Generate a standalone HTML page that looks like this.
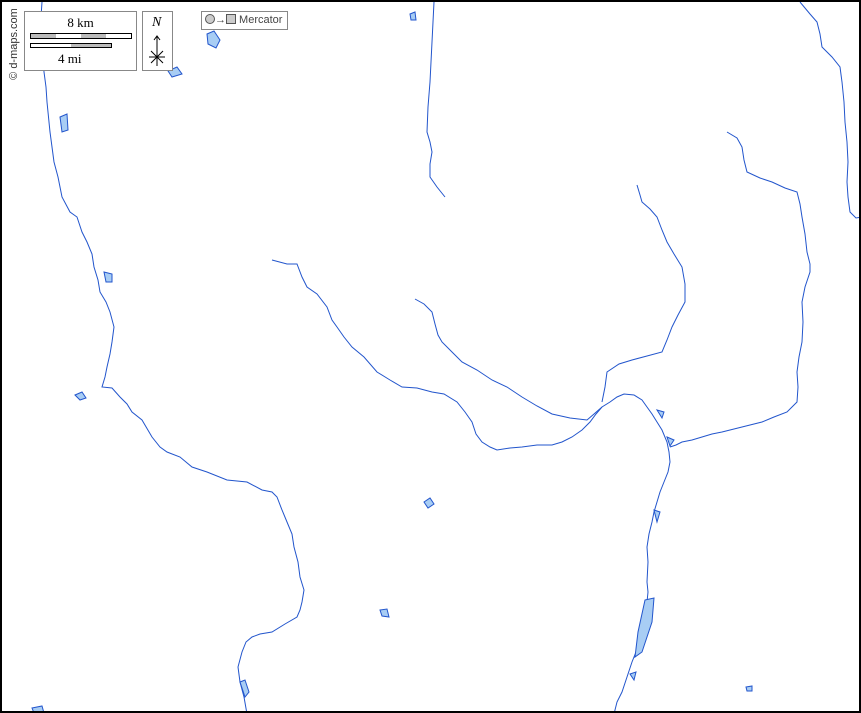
<!DOCTYPE html><html><head><style>
html,body{margin:0;padding:0;background:#fff}
#m{position:relative;width:861px;height:713px;box-sizing:border-box;border:2px solid #000;overflow:hidden;font-family:"Liberation Serif",serif}
svg{position:absolute;left:0;top:0}
</style></head><body><div id="m">
<svg width="861" height="713" viewBox="0 0 861 713">
<g fill="none" stroke="#2255cc" stroke-width="1">
<polyline points="40,0 38,30 42,70 44,85 45,100 48,130 52,160 56,175 60,195 68,210 75,215 80,230 85,240 90,252 92,265 96,278 98,290 104,300 108,310 112,325 110,340 108,352 105,365 103,375 100,385 110,386 118,395 125,402 130,410 140,418 150,435 158,445 165,450 178,455 190,465 205,470 225,478 245,480 260,488 270,490 275,495 280,508 285,520 290,532 292,545 296,560 298,575 302,588 300,600 298,608 295,615 283,622 270,630 258,632 250,635 244,640 240,650 236,665 238,680 242,695 245,712"/>
<polyline points="432,0 431,20 430,40 429,60 428,80 426,105 425,130 428,140 430,150 428,162 428,175 435,185 443,195"/>
<polyline points="798,0 808,12 815,20 818,32 820,45 830,55 838,65 840,80 842,100 843,120 845,140 846,160 845,180 846,195 848,210 854,216 860,215"/>
<polyline points="270,258 285,262 295,262 300,275 305,285 315,292 325,305 330,318 335,325 342,335 350,345 362,355 375,370 388,378 400,385 415,386 430,390 442,392 455,400 463,410 470,420 474,432 480,440 488,445 495,448 508,446 520,445 535,443 550,443 560,440 570,435 580,428 588,420 594,412 600,405 608,400 615,395 622,392 632,393 640,398 645,405 650,412 655,420 660,428 665,440 667,450 668,460 666,470 662,480 658,490 655,500 652,510 650,520 647,532 645,545 646,560 645,580 646,590 645,600 642,615 640,630 636,645 630,660 625,675 620,690 615,700 612,712"/>
<polyline points="413,297 422,302 430,310 433,322 436,333 440,340 450,350 460,360 475,368 490,378 505,385 520,395 535,404 550,412 568,416 585,418 592,412 600,405"/>
<polyline points="635,183 638,193 640,200 648,207 655,215 660,228 665,240 672,252 680,265 683,282 683,300 676,313 670,325 665,338 660,350 645,354 630,358 617,362 605,370 603,385 600,400"/>
<polyline points="725,130 735,136 740,145 742,158 745,170 758,176 770,180 783,186 795,190 798,202 800,215 803,232 805,250 808,262 808,270 803,285 800,300 801,320 800,340 797,355 795,370 796,385 795,400 790,405 785,410 772,415 760,420 740,425 720,430 710,432 700,435 690,438 680,440 674,443 668,445"/>
</g>
<g fill="#a8cdf4" stroke="#2255cc" stroke-width="1">
<path d="M205,32 L212,29 L218,38 L214,46 L206,42Z"/><path d="M166,69 L175,65 L180,72 L170,75Z"/>
<path d="M102,270 L110,272 L110,280 L104,280Z"/><path d="M73,393 L80,390 L84,396 L78,398Z"/>
<path d="M378,608 L385,607 L387,615 L380,614Z"/><path d="M643,598 L652,596 L650,620 L640,650 L633,655 L636,630Z"/>
<path d="M238,680 L243,678 L247,690 L243,695Z"/><path d="M652,508 L658,510 L655,520Z"/>
<path d="M58,115 L65,112 L66,128 L60,130Z"/>
<path d="M422,500 L428,496 L432,502 L426,506Z"/><path d="M408,12 L413,10 L414,18 L409,18Z"/>
<path d="M655,408 L662,410 L660,416Z"/><path d="M665,435 L672,438 L668,444Z"/>
<path d="M628,672 L634,670 L632,678Z"/><path d="M744,685 L750,684 L750,689 L745,689Z"/>
<path d="M30,706 L40,704 L42,711 L32,711Z"/>
</g>
</svg>
<div style="position:absolute;left:22px;top:9px;width:111px;height:58px;border:1px solid #888;background:#fff;font-size:13px">
<div style="position:absolute;left:0;width:111px;top:3px;text-align:center">8 km</div>
<div style="position:absolute;left:5px;top:21px;width:100px;height:4px;border:1px solid #000;background:linear-gradient(90deg,#bbb 25%,#fff 25%,#fff 50%,#bbb 50%,#bbb 75%,#fff 75%)"></div>
<div style="position:absolute;left:5px;top:31px;width:80px;height:3px;border:1px solid #000;background:linear-gradient(90deg,#fff 50%,#bbb 50%)"></div>
<div style="position:absolute;left:33px;top:39px">4 mi</div></div>
<div style="position:absolute;left:140px;top:9px;width:29px;height:58px;border:1px solid #888;background:#fff">
<div style="position:absolute;left:9px;top:3px;font-style:italic;font-size:14px">N</div>
<svg width="29" height="58" style="position:absolute;left:0;top:0"><g stroke="#000" fill="none" stroke-width="1"><line x1="14" y1="24" x2="14" y2="54"/><polyline points="11,28 14,24 17,28"/><line x1="6" y1="45" x2="22" y2="45"/><line x1="8" y1="39" x2="20" y2="51"/><line x1="20" y1="39" x2="8" y2="51"/></g></svg></div>
<div style="position:absolute;left:199px;top:9px;width:85px;height:17px;border:1px solid #888;background:#fff;font-family:'Liberation Sans',sans-serif;font-size:11px;color:#444;line-height:17px">
<span style="display:inline-block;width:8px;height:8px;border-radius:50%;border:1px solid #555;background:#ccc;margin-left:3px;vertical-align:-1px"></span>→<span style="display:inline-block;width:8px;height:8px;border:1px solid #555;background:#ccc;vertical-align:-1px"></span> Mercator</div>
<div style="position:absolute;left:-28px;top:36px;transform:rotate(-90deg);font-family:'Liberation Sans',sans-serif;font-size:11px;color:#333;width:80px;text-align:center">© d-maps.com</div>
</div></body></html>
